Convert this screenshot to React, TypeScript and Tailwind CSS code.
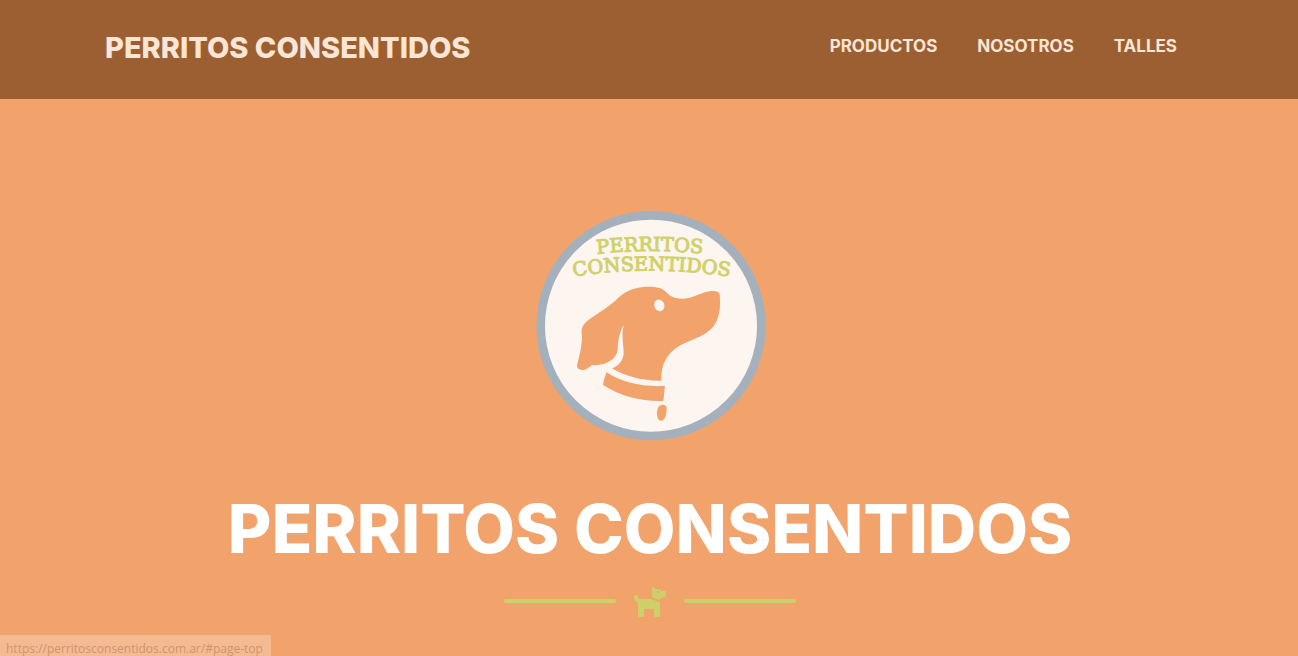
import { FaDog } from "react-icons/fa";

const links = [
  { label: "PRODUCTOS", href: "#productos" },
  { label: "NOSOTROS", href: "#nosotros" },
  { label: "TALLES", href: "#talles" },
];

function Logo() {
  return (
    <svg viewBox="0 0 720 720" className="size-60" role="img" aria-label="Perritos Consentidos">
      <defs>
        <path id="arc-top" d="M201 147 Q355 129 530 147" />
        <path id="arc-bottom" d="M131 215 Q362 176 630 219" />
      </defs>
      <circle cx="363" cy="362" r="331" fill="#fdf5ef" stroke="#a5b0bd" strokeWidth="26" />
      <g
        fill="#d0d16b"
        stroke="#d0d16b"
        strokeWidth="3"
        fontFamily="'DejaVu Serif', serif"
        fontWeight="400"
        fontSize="58"
      >
        <text>
          <textPath href="#arc-top">PERRITOS</textPath>
        </text>
        <text>
          <textPath href="#arc-bottom">CONSENTIDOS</textPath>
        </text>
      </g>
      <g fill="#f2a36b">
        <path d="M141 483 C145 462 153 440 156 402 C157 390 152 380 157 367 C162 352 180 341 198 329 C225 311 245 299 264 279 C293 252 325 245 357 245 C388 245 399 251 412 265 C423 277 439 282 460 281 C490 280 515 260 545 258 C557 257 567 260 569 267 C572 305 570 340 549 366 C522 397 479 404 446 424 C414 444 392 475 394 527 C340 528 290 516 246 490 C268 481 281 465 281 440 C280 414 274 389 281 359 C268 384 264 405 263 432 C262 464 221 484 187 480 C176 487 169 496 156 495 C147 494 141 490 141 483 Z" />
        <path d="M230 502 C275 531 330 546 405 543 L400 588 C335 590 275 575 219 540 C221 526 225 514 230 502 Z" />
        <path d="M397 599 C407 599 411 604 410 615 C409 632 404 647 394 647 C384 647 380 634 381 620 C382 607 387 600 397 599 Z" />
      </g>
      <ellipse cx="388" cy="301" rx="15" ry="18" transform="rotate(-20 388 301)" fill="#fdf5ef" />
    </svg>
  );
}

export default function App() {
  return (
    <div
      id="page-top"
      className="flex min-h-screen flex-col bg-[#f2a36b] font-['Inter','Liberation_Sans',sans-serif] font-bold"
    >
      <header className="bg-[#9c5f32]">
        <div className="mx-auto flex max-w-[1088px] items-start justify-between pt-6 pb-7">
          <a href="#page-top" className="text-[29px] leading-[47px] font-extrabold text-[#fbe5d5]">
            PERRITOS CONSENTIDOS
          </a>
          <nav className="flex gap-2">
            {links.map((link) => (
              <a key={link.href} href={link.href} className="px-4 text-[17px] leading-11 text-[#fbe5d5]">
                {link.label}
              </a>
            ))}
          </nav>
        </div>
      </header>

      <main className="flex flex-col items-center pt-[106px] pb-10 pl-0.5">
        <Logo />
        <h1 className="mt-12 text-center text-[67px] leading-[72px] font-extrabold text-white">
          PERRITOS CONSENTIDOS
        </h1>
        <div className="mt-5 flex items-center gap-4 text-[#cdcf68]">
          <span className="h-1 w-28 rounded-full bg-[#cdcf68]" />
          <FaDog className="h-8 w-9" aria-hidden="true" />
          <span className="h-1 w-28 rounded-full bg-[#cdcf68]" />
        </div>
      </main>

      <div className="fixed bottom-0 left-0 h-[22px] overflow-hidden rounded-tr-xs border-t border-r border-[#e5a67a] bg-[#f5ba92] pr-2 pl-[6px] font-['Open_Sans',sans-serif] text-[12px] leading-7 font-normal text-[#cb966f]">
        https://perritosconsentidos.com.ar/#page-top
      </div>
    </div>
  );
}
